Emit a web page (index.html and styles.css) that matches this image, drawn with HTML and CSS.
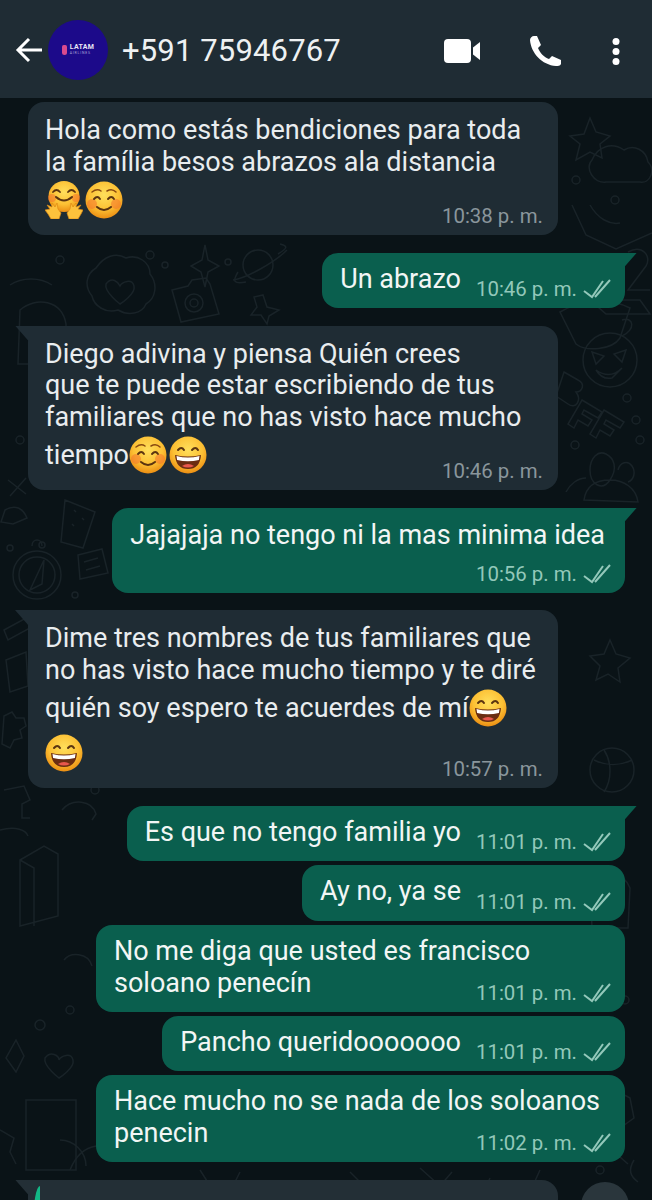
FILE: index.html
```html
<!DOCTYPE html>
<html lang="es">
<head>
    <meta charset="UTF-8">
    <title>+591 75946767</title>
    <link rel="stylesheet" href="styles.css">
</head>
<body>
    <!-- shared emoji drawings -->
    <svg class="defs" width="0" height="0">
        <defs>
            <radialGradient id="faceFill" cx="50%" cy="36%" r="66%">
                <stop offset="0" stop-color="#ffdf5c"/>
                <stop offset="0.6" stop-color="#fcc034"/>
                <stop offset="1" stop-color="#ea8a10"/>
            </radialGradient>
            <symbol id="smile" viewBox="0 0 38 38">
                <circle cx="19" cy="19" r="18.500" fill="url(#faceFill)"/>
                <circle cx="7" cy="23" r="5" fill="#f4742e" opacity=".55"/>
                <circle cx="31" cy="23" r="5" fill="#f4742e" opacity=".55"/>
                <path d="M7 11q5-4 9-1M22 10q5-3 9 1" fill="none" stroke="#8a4a10" stroke-width="1.500" stroke-linecap="round"/>
                <path d="M9 18q3.500-4 6 0M23 18q3.500-4 6 0" fill="none" stroke="#5b3410" stroke-width="1.900" stroke-linecap="round"/>
                <path d="M12 26q7 6 14 0" fill="none" stroke="#5b3410" stroke-width="2" stroke-linecap="round"/>
            </symbol>
            <symbol id="grin" viewBox="0 0 38 38">
                <circle cx="19" cy="19" r="18.500" fill="url(#faceFill)"/>
                <path d="M9 14q3.500-4 6 0M23 14q3.500-4 6 0" fill="none" stroke="#5b3410" stroke-width="2" stroke-linecap="round"/>
                <path d="M6 19q13 3 26 0q-1 14-13 14T6 19z" fill="#6b2d12"/>
                <path d="M7.500 20q11.500 3 23 0l-.6 4q-11 2.500-21.800 0z" fill="#fff"/>
                <path d="M13 30q6-4 12 0q-6 3-12 0z" fill="#e8574d"/>
            </symbol>
            <symbol id="hug" viewBox="0 0 38 38">
                <circle cx="19" cy="15.500" r="15.500" fill="url(#faceFill)"/>
                <circle cx="7" cy="17" r="4" fill="#f4742e" opacity=".55"/>
                <circle cx="31" cy="17" r="4" fill="#f4742e" opacity=".55"/>
                <path d="M8 11q3.500-4 7 0M23 11q3.500-4 7 0" fill="none" stroke="#5b3410" stroke-width="1.800" stroke-linecap="round"/>
                <path d="M11 16q8 7 16 0" fill="none" stroke="#5b3410" stroke-width="2" stroke-linecap="round"/>
                <path d="M0 29l5-1-3-4 5 2 0-4 3 4 2-4 1 6 3 4-2 6H6l-3-5z" fill="#fdc23c" stroke="#e08a12" stroke-width=".7"/>
                <path d="M38 29l-5-1 3-4-5 2 0-4-3 4-2-4-1 6-3 4 2 6h9l3-5z" fill="#fdc23c" stroke="#e08a12" stroke-width=".7"/>
            </symbol>
            <symbol id="ticks" viewBox="0 0 28 20">
                <path d="M1 12l8 6L20 2M12 18L27 1" fill="none" stroke="currentColor" stroke-width="2"/>
            </symbol>
        </defs>
    </svg>

    <div class="phone">
        <!-- faint wallpaper doodles behind the chat -->
        <svg class="wallpaper" width="652" height="1200" viewBox="0 0 652 1200" fill="none" stroke="#192328" stroke-width="1.500">
            <path d="M96 268c8-12 20-16 30-10 12-4 24 4 24 16 8 10 6 24-4 30-4 10-18 12-28 6-12 4-24-4-26-14-8-10-6-22 4-28z"/>
            <path d="M106 284c6-8 12-2 14 2 2-4 12-8 14 0 2 8-14 18-14 18s-16-12-14-20z"/>
            <path d="M172 290l16-4 4-6 14-2 4 6 9 30-38 8z"/><circle cx="194" cy="303" r="9"/><circle cx="194" cy="303" r="4"/>
            <path d="M205 245l3 15 11 6-11 6-3 15-4-15-10-6 11-6z"/>
            <circle cx="258" cy="265" r="15"/><path d="M233 280c14-2 42-18 54-30"/><path d="M238 272c-6 10-4 12 8 10M278 254c10-6 10-8 2-10"/>
            <path d="M263 295l4 12 12 3-10 6-2 8-6-9-10 0 6-8-3-10z"/>
            <path d="M10 285c12-8 30-8 42 0M20 310c16-14 42-10 46 14l0 40H18z"/>
            <path d="M560 312c20-12 50-14 70-4l-10 30c-8 12-34 14-44 6zM622 320c12-4 14 10 0 16"/>
            <path d="M628 252c14-8 24 4 18 14l-18 24h22M590 300l50 0 10 14-44 0z"/>
            <circle cx="610" cy="360" r="27"/><path d="M592 352l12 4-8 8zM626 350l-12 4 8 8zM596 370q14 10 26-2l-10 10q-10 2-16-8z"/>
            <path d="M564 372l14 8c8 4 4 12-2 12 6 8 0 18-8 12l-12-8zM582 400l20 12-4 6-14-8-2 4 10 6-4 6-10-6-4 8-6-4zM604 410l20 12-4 6-14-8-2 4 10 6-4 6-10-6-4 8-6-4z"/>
            <path d="M590 470c0-12 8-20 16-16s12 14 4 26-20 4-20-10zM584 500c2-14 12-20 26-20s26 8 28 22zM566 492c4-8 12-14 20-14M618 470c2-8 10-10 14-4s2 14-4 16"/>
            <circle cx="37" cy="575" r="24"/><circle cx="37" cy="575" r="18"/><path d="M30 590l14-30-2 24zM32 546c0-8 10-8 10 0"/>
            <path d="M65 500l30 12-12 36-22 -6zM74 510l2 2M82 518l2 2M72 524l2 2"/>
            <path d="M5 510c10-6 18-2 22 8l-14 6-12-2zM8 480l18 14M26 478l-16 18"/>
            <path d="M78 555l24-6 6 24-28 6zM84 562l14-4M86 570l14-4"/>
            <path d="M4 630l22-12 4 10-22 12zM6 660l20-8 2 34-18 6z"/>
            <path d="M4 716l8-4 4 6 8 0 2 8-6 4 2 8-8 2-4 8-8-4z"/>
            <path d="M4 790l20-4 6 14-8 4v14h8M0 830c16-4 26 0 28 6"/>
            <path d="M62 810c10-12 30-10 34 4l-4 6"/>
            <path d="M20 860l24-14 14 8v62l-38 10zM20 860l14 8v58"/><path d="M64 960c6-8 24-8 28 6"/>
            <path d="M16 1040l8 16-8 16-10-14z"/><path d="M45 1058c6-8 14-2 14 2 2-4 12-8 14 0 2 8-14 18-14 18s-16-12-14-20z"/>
            <path d="M26 1100h50v70H26z"/><path d="M70 1170c12-30 40-30 54-12M60 1140c14 0 26 12 26 26"/><path d="M0 1130l14 8-4 14 6 12"/>
            <path d="M610 640l6 14 14 4-12 10 2 14-12-8-12 6 4-14-10-10 14-2z"/>
            <circle cx="612" cy="770" r="22"/><path d="M594 760c12 6 26 6 38 0M604 750c8 12 8 30 0 42"/>
            <path d="M590 880c12-12 34-8 40 8l-2 40h-36zM596 900h26M600 912h20"/>
            <path d="M600 1100c8-10 20-8 30-2l4 20-14 10c-10 4-18-10-20-28zM612 1150l16 14M634 1160c-6 10-4 16 4 22"/>
            <path d="M592 160c6-14 20-18 32-10 10-6 22 0 24 12 8 8 2 22-8 20h-34c-12 2-22-14-14-22z"/>
            <path d="M590 118l6 14 14 4-10 8 2 14-12-6-14 8 4-16-10-8 14-2z"/>
            <path d="M572 205l14 30 30 14 36-16M590 205c8 14 20 20 30 18"/><circle cx="615" cy="200" r="4"/>
            <path d="M200 1170l14 22M240 1172l-10 20M350 1172l16 16M420 1168l20 18 12-14M490 1178l-8 18M540 1170l-10 22"/>
            <g><circle cx="150" cy="255" r="4"/><circle cx="60" cy="260" r="4"/><circle cx="20" cy="440" r="4"/><circle cx="95" cy="790" r="4"/><circle cx="575" cy="445" r="4"/><circle cx="640" cy="440" r="4"/><circle cx="636" cy="420" r="4"/><circle cx="627" cy="398" r="4"/><circle cx="625" cy="1000" r="4"/><circle cx="40" cy="1025" r="5"/><circle cx="70" cy="1010" r="4"/><circle cx="600" cy="1170" r="4"/><circle cx="576" cy="180" r="4"/><circle cx="42" cy="545" r="3"/><circle cx="10" cy="548" r="3"/><circle cx="75" cy="595" r="3"/><circle cx="228" cy="262" r="3"/><circle cx="165" cy="265" r="3"/></g>
        </svg>

        <header class="topbar">
            <svg class="back" width="27" height="26" viewBox="0 0 27 26" fill="none" stroke="#fff" stroke-width="3">
                <path d="M27 13H3M14 2L3 13l11 11"/>
            </svg>
            <div class="avatar">
                <div class="avatar-logo">
                    <span class="avatar-mark"></span>
                    <div>
                        <div class="avatar-name">LATAM</div>
                        <div class="avatar-sub">AIRLINES</div>
                    </div>
                </div>
            </div>
            <div class="contact">+591 75946767</div>
            <div class="actions">
                <svg width="36" height="24" viewBox="0 0 36 24" fill="#fff">
                    <rect x="0" y="0" width="27" height="24" rx="4"/>
                    <path d="M29 8.500l7-5.500v18l-7-5.500z"/>
                </svg>
                <svg width="31" height="30" viewBox="0 0 31 30" fill="#fff">
                    <path d="M0 4C0 2 2 0 4 0h3l4 9-3 3c2 5 6 9 11 11l3-3 9 4v4c-1 2-3 2-5 2C12 29 1 17 0 4z"/>
                </svg>
                <svg width="10" height="27" viewBox="0 0 10 27" fill="#fff">
                    <circle cx="5" cy="3.500" r="3.500"/><circle cx="5" cy="13.500" r="3.500"/><circle cx="5" cy="23.500" r="3.500"/>
                </svg>
            </div>
        </header>

        <main class="chat">
            <div class="bubble in">
                <p class="text">Hola como estás bendiciones para toda<br>la família besos abrazos ala distancia</p>
                <p class="emoji-line"><svg class="emoji"><use href="#hug"/></svg><svg class="emoji"><use href="#smile"/></svg></p>
                <div class="time in-time">10:38 p. m.</div>
            </div>

            <div class="bubble out tail gap-lg">
                <span class="text">Un abrazo</span>
                <span class="time">10:46 p. m. <svg class="ticks"><use href="#ticks"/></svg></span>
            </div>

            <div class="bubble in tail gap-lg">
                <p class="text">Diego adivina y piensa Quién crees<br>que te puede estar escribiendo de tus<br>familiares que no has visto hace mucho</p>
                <p class="emoji-line">tiempo<svg class="emoji"><use href="#smile"/></svg><svg class="emoji"><use href="#grin"/></svg></p>
                <div class="time in-time">10:46 p. m.</div>
            </div>

            <div class="bubble out tail stacked gap-lg">
                <p class="text">Jajajaja no tengo ni la mas minima idea</p>
                <div class="time">10:56 p. m. <svg class="ticks"><use href="#ticks"/></svg></div>
            </div>

            <div class="bubble in tail gap-lg">
                <p class="text">Dime tres nombres de tus familiares que<br>no has visto hace mucho tiempo y te diré</p>
                <p class="emoji-line">quién soy espero te acuerdes de mí<svg class="emoji"><use href="#grin"/></svg></p>
                <p class="emoji-line"><svg class="emoji"><use href="#grin"/></svg></p>
                <div class="time in-time">10:57 p. m.</div>
            </div>

            <div class="bubble out tail gap-lg">
                <span class="text">Es que no tengo familia yo</span>
                <span class="time">11:01 p. m. <svg class="ticks"><use href="#ticks"/></svg></span>
            </div>

            <div class="bubble out gap-sm">
                <span class="text">Ay no, ya se</span>
                <span class="time">11:01 p. m. <svg class="ticks"><use href="#ticks"/></svg></span>
            </div>

            <div class="bubble out two-line gap-sm">
                <p class="text">No me diga que usted es francisco<br>soloano penecín</p>
                <div class="time">11:01 p. m. <svg class="ticks"><use href="#ticks"/></svg></div>
            </div>

            <div class="bubble out gap-sm">
                <span class="text">Pancho queridooooooo</span>
                <span class="time">11:01 p. m. <svg class="ticks"><use href="#ticks"/></svg></span>
            </div>

            <div class="bubble out two-line gap-sm">
                <p class="text">Hace mucho no se nada de los soloanos<br>penecin</p>
                <div class="time">11:02 p. m. <svg class="ticks"><use href="#ticks"/></svg></div>
            </div>

            <div class="bubble in tail last gap-lg">
                <span class="reply-bar"></span>
            </div>
        </main>
        <div class="fab"></div>
    </div>
</body>
</html>
```

FILE: styles.css
```css
html, body {
    margin: 0;
    padding: 0;
    background-color: #0a1317;
}
.defs {
    position: absolute;
}
.phone {
    position: relative;
    width: 652px;
    height: 1200px;
    overflow: hidden;
    font-family: Roboto, "Liberation Sans", sans-serif;
    background-color: #0a1317;
}
.wallpaper {
    position: absolute;
    top: 0;
    left: 0;
}

/* top bar */
.topbar {
    position: relative;
    display: flex;
    align-items: center;
    height: 98px;
    padding: 2px 31px 0 15px;
    box-sizing: border-box;
    background-color: #1f2c34;
    color: #fff;
}
.back {
    flex: none;
}
.avatar {
    display: flex;
    align-items: center;
    justify-content: center;
    flex: none;
    width: 60px;
    height: 60px;
    margin-left: 6px;
    border-radius: 50%;
    background-color: #1c0a8a;
}
.avatar-logo {
    display: flex;
    align-items: center;
    gap: 3px;
}
.avatar-mark {
    width: 5px;
    height: 10px;
    background-color: #d84a8e;
    border-radius: 2px 2px 3px 3px;
}
.avatar-name {
    font-size: 7px;
    font-weight: 700;
    color: #e8e6f5;
    line-height: 7px;
    letter-spacing: .3px;
}
.avatar-sub {
    font-size: 3.500px;
    letter-spacing: .8px;
    color: #aaa6d8;
    line-height: 5px;
}
.contact {
    margin-left: 14px;
    font-size: 31px;
    color: #eef1f2;
    letter-spacing: .15px;
}
.actions {
    display: flex;
    align-items: center;
    gap: 50px;
    margin-left: auto;
    padding-top: 2px;
}

/* chat */
.chat {
    position: relative;
    display: flex;
    flex-direction: column;
    padding: 4px 27px 0 28px;
}
.bubble {
    position: relative;
    box-sizing: border-box;
    border-radius: 16px;
    color: #e9edef;
    font-size: 27px;
}
.bubble p {
    margin: 0;
}
.text {
    line-height: 31.500px;
    white-space: nowrap;
}
.in {
    align-self: flex-start;
    width: 530px;
    padding: 13px 15px 6px 17px;
    background-color: #1f2c34;
}
.out {
    display: flex;
    align-items: flex-end;
    justify-content: space-between;
    align-self: flex-end;
    gap: 15px;
    padding: 11px 14px 6px 18px;
    background-color: #0a5f4e;
    color: #f2f6f5;
}
.out .text {
    margin-bottom: 7px;
}
.stacked {
    display: block;
    padding: 12px 20px 6px 18px;
}
.stacked .text {
    margin-bottom: 0;
}
.stacked .time {
    display: flex;
    justify-content: flex-end;
    margin: 9.500px -6px 0 0;
}
/* long two-line bubbles: the stamp sits under the first line, beside the second */
.two-line {
    display: block;
    width: 529px;
    padding-top: 10px;
}
.two-line .text {
    line-height: 32px;
    margin-bottom: 0;
}
.two-line .time {
    display: flex;
    justify-content: flex-end;
    margin-top: -19px;
}
.tail.in {
    border-top-left-radius: 0;
}
.tail.out {
    border-top-right-radius: 0;
}
.tail::before {
    content: "";
    position: absolute;
    top: 0;
    width: 14px;
    height: 16px;
}
.tail.in::before {
    left: -13px;
    background-color: #1f2c34;
    clip-path: polygon(0 0, 100% 0, 100% 100%);
}
.tail.out::before {
    right: -12px;
    background-color: #0a5f4e;
    clip-path: polygon(0 0, 100% 0, 0 100%);
}
.time {
    display: inline-flex;
    align-items: center;
    flex: none;
    gap: 6px;
    font-size: 20.400px;
    color: #93c8ba;
    white-space: nowrap;
    line-height: 26px;
}
.in-time {
    display: block;
    margin-top: -20px;
    text-align: right;
    color: #8a969c;
}
.emoji-line {
    line-height: 45px;
    height: 45px;
    white-space: nowrap;
}
.emoji {
    width: 38px;
    height: 38px;
    margin-right: 2px;
    vertical-align: -10px;
}
.ticks {
    width: 28px;
    height: 20px;
    color: #93c8ba;
}
.gap-sm { margin-top: 4px; }
.gap-lg { margin-top: 17.500px; }
.last {
    height: 60px;
    background-color: #232f36;
}
.tail.last::before {
    background-color: #232f36;
}
.reply-bar {
    position: absolute;
    left: 5px;
    top: 6px;
    width: 7px;
    height: 40px;
    border-radius: 100% 0 0 0;
    background-color: #12b886;
}
.fab {
    position: absolute;
    left: 581px;
    top: 1182px;
    width: 48px;
    height: 48px;
    border-radius: 50%;
    background-color: #2a363c;
}
```
